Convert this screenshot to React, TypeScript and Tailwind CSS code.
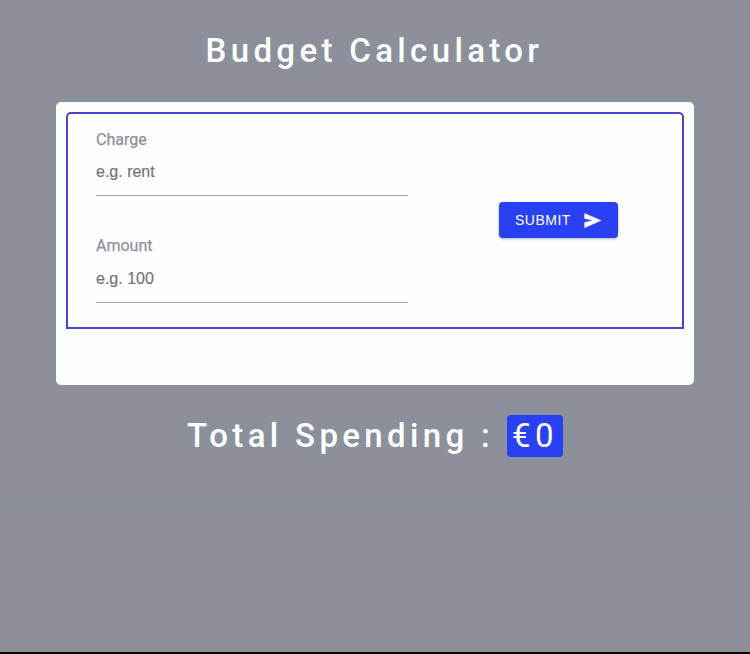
const fields = [
  { label: "Charge", placeholder: "e.g. rent" },
  { label: "Amount", placeholder: "e.g. 100" },
];

export default function App() {
  return (
    <div className="h-[654px] w-[750px] overflow-hidden border-b-2 border-black bg-[#8f8f9b] font-['Roboto',sans-serif]">
      <div className="h-[509px] border-r border-[#838893] bg-[#8b909b]">
        <h1 className="h-[102px] pt-[28px] pl-[205.5px] text-[33px] leading-[46px] font-medium tracking-[4.35px] whitespace-nowrap text-white">
          Budget Calculator
        </h1>
        <main className="ml-[56px] h-[283px] w-[638px] rounded-[5px] bg-[#fefefe] p-[10px]">
          <form className="flex h-[217px] w-[618px] rounded-t-[5px] border-2 border-[#4843d0] pl-[28px]">
            <div className="-mt-px w-[312px]">
              {fields.map((field) => (
                <div key={field.label} className="h-[106.5px] pt-[14.5px]">
                  <label className="block h-[24px] text-base leading-[24px] text-[#8f8f9b] [-webkit-text-stroke:0.25px]">{field.label}</label>
                  <input
                    placeholder={field.placeholder}
                    className="block h-[44.5px] w-full border-b border-[#a1a2aa] pb-[2px] font-['Liberation_Sans',sans-serif] text-base outline-none placeholder:text-[#757575] placeholder:[-webkit-text-stroke:0.2px]"
                  />
                </div>
              ))}
            </div>
            <button
              type="button"
              className="mt-[88px] ml-[91px] flex h-[36px] w-[119px] items-center rounded bg-[#2941f3] pl-4 font-['Liberation_Sans',sans-serif] text-sm tracking-[0.5px] text-white shadow-[0_1px_3px_rgba(0,0,0,0.3)]"
            >
              <span className="w-[68px] text-left">SUBMIT</span>
              <svg viewBox="0 0 24 24" className="size-[19px]" fill="currentColor" stroke="currentColor" strokeWidth="0.5">
                <path d="M2.01 21 23 12 2.01 3 2 9.5l10.5 2.5-10.5 2.5z" />
              </svg>
            </button>
          </form>
        </main>
        <div className="flex pt-[30px] pl-[187px] text-[33px] leading-[42px] font-medium tracking-[4.35px] whitespace-nowrap text-white">
          <span className="w-[320px]">Total Spending :</span>
          <span className="h-[42px] w-[56px] rounded bg-[#2941f3] pl-[5px] font-normal">€0</span>
        </div>
      </div>
    </div>
  );
}
